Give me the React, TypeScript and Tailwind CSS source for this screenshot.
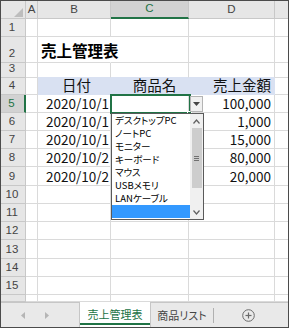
import React from "react";

type Row = { n?: number; h: string; date?: string; val?: string };

const rows: Row[] = [
  { n: 1, h: "h-[18px]" },
  { n: 2, h: "h-[26px]" },
  { n: 3, h: "h-[15px]" },
  { n: 4, h: "h-[17px]" },
  { n: 5, h: "h-[18px]", date: "2020/10/1", val: "100,000" },
  { n: 6, h: "h-[18px]", date: "2020/10/1", val: "1,000" },
  { n: 7, h: "h-[18px]", date: "2020/10/1", val: "15,000" },
  { n: 8, h: "h-[18px]", date: "2020/10/2", val: "80,000" },
  { n: 9, h: "h-[19px]", date: "2020/10/2", val: "20,000" },
  { n: 10, h: "h-[18px]" },
  { n: 11, h: "h-[18px]" },
  { n: 12, h: "h-[18px]" },
  { n: 13, h: "h-[19px]" },
  { n: 14, h: "h-[18px]" },
  { n: 15, h: "h-[18px]" },
  { h: "h-[7px]" },
];

const items = ["デスクトップPC", "ノートPC", "モニター", "キーボード", "マウス", "USBメモリ", "LANケーブル", ""];

function DataRow({ r }: { r: Row }) {
  const sel = r.n === 5;
  const isHead = r.n === 4;
  const isTitle = r.n === 2;
  const isAbove = r.n === 3;
  const fillBorder = isHead ? "border-r-[#d9e1f2] border-b-[#d9e1f2] bg-[#d9e1f2]" : isAbove ? "border-b-[#d9e1f2]" : "";
  return (
    <div className={`flex shrink-0 ${r.h}`}>
      <div
        className={`w-[25px] shrink-0 border-b border-[#c8c8c8] flex items-end justify-center pb-[1px] text-[11.5px] leading-none font-['Liberation_Sans',sans-serif] ${
          sel ? "bg-[#d2d2d2] text-[#217346] border-r-2 border-r-[#217346]" : "bg-[#e6e6e6] text-[#444] border-r"
        }`}
      >
        <span className="mb-[2px] mr-[2px]">{r.n ?? ""}</span>
      </div>
      <div className="w-[12px] shrink-0 border-r border-b border-[#dadada]" />
      <div
        className={`w-[73px] shrink-0 border-r border-b border-[#dadada] flex items-end ${fillBorder} ${
          isTitle ? "border-r-transparent" : ""
        } ${isHead ? "justify-center" : "justify-end"} relative`}
      >
        {isTitle && (
          <span className="absolute left-[3px] bottom-[4px] whitespace-nowrap text-[15.5px] font-bold leading-none text-black">
            売上管理表
          </span>
        )}
        {isHead && <span className="text-[14.5px] leading-none mb-[2px] pl-[5px] text-[#111]">日付</span>}
        {r.date && <span className="text-[13.5px] leading-none mb-[2px] pr-[1px] text-[#111]">{r.date}</span>}
      </div>
      <div className={`w-[78px] shrink-0 border-r border-b border-[#dadada] flex items-end justify-center ${fillBorder}`}>
        {isHead && <span className="text-[14.5px] leading-none mb-[2px] pl-[10px] text-[#111]">商品名</span>}
      </div>
      <div className={`w-[86px] shrink-0 border-r border-b border-[#dadada] flex items-end justify-end ${fillBorder}`}>
        {isHead && <span className="text-[14.5px] leading-none mb-[2px] pr-[3px] text-[#111]">売上金額</span>}
        {r.val && <span className="text-[13.5px] leading-none mb-[2px] pr-[3px] text-[#111]">{r.val}</span>}
      </div>
      <div className="flex-1 border-b border-[#dadada]" />
    </div>
  );
}

export default function App() {
  return (
    <div className="w-[290px] h-[329px] bg-white font-['Noto_Sans_CJK_JP',sans-serif]">
      <div className="w-[289px] h-[328px] border border-[#4b4b4b] flex flex-col overflow-hidden relative">
        {/* column headers */}
        <div className="flex h-[18px] shrink-0 text-[11.5px] leading-none text-[#444] font-['Liberation_Sans',sans-serif]">
          <div className="w-[25px] shrink-0 bg-[#e6e6e6] border-r border-b border-[#c8c8c8] relative">
            <svg className="absolute left-[13px] top-[7px]" width="9" height="9" viewBox="0 0 9 9">
              <polygon points="9,0 9,9 0,9" fill="#bdbdbd" />
            </svg>
          </div>
          <div className="w-[12px] shrink-0 bg-[#e6e6e6] border-r border-b border-[#c8c8c8] flex items-center justify-center">A</div>
          <div className="w-[73px] shrink-0 bg-[#e6e6e6] border-r border-b border-[#c8c8c8] flex items-center justify-center">B</div>
          <div className="w-[78px] shrink-0 bg-[#d2d2d2] border-r border-[#c8c8c8] border-b-2 border-b-[#217346] text-[#217346] flex items-center justify-center">C</div>
          <div className="w-[86px] shrink-0 bg-[#e6e6e6] border-r border-b border-[#c8c8c8] flex items-center justify-center">D</div>
          <div className="flex-1 bg-[#e6e6e6] border-b border-[#c8c8c8]" />
        </div>

        {rows.map((r, i) => (
          <DataRow key={i} r={r} />
        ))}

        {/* sheet tab bar */}
        <div className="flex-1 flex bg-[#e9e9e9] border-t border-[#c6c6c6] relative">
          <div className="w-[78px] shrink-0 flex items-center">
            <svg className="ml-[20px]" width="5" height="7" viewBox="0 0 5 7">
              <polygon points="4,0 4,7 0,3.5" fill="#b5b5b5" />
            </svg>
            <svg className="ml-[18px]" width="5" height="7" viewBox="0 0 5 7">
              <polygon points="1,0 1,7 5,3.5" fill="#b5b5b5" />
            </svg>
          </div>
          <div className="w-[72px] shrink-0 bg-white border-l border-r border-[#c6c6c6] -mt-px flex flex-col">
            <div className="flex-1 flex items-center justify-center text-[11px] text-[#217346] leading-none pt-[3px]">
              売上管理表
            </div>
            <div className="h-[2px] bg-[#217346] mb-[2px]" />
          </div>
          <div className="w-[62px] shrink-0 flex items-center justify-center text-[11px] text-[#444] leading-none pt-[1px] [font-feature-settings:'palt']">
            商品リスト
          </div>
          <div className="w-px h-[15px] bg-[#b0b0b0] self-center mt-[1px]" />
          <div className="w-[68px] shrink-0 flex items-center justify-center pt-[1px]">
            <svg width="13" height="13" viewBox="0 0 13 13">
              <circle cx="6.5" cy="6.5" r="5.8" fill="none" stroke="#6a6a6a" strokeWidth="1" />
              <line x1="6.5" y1="3.5" x2="6.5" y2="9.5" stroke="#6a6a6a" strokeWidth="1.2" />
              <line x1="3.5" y1="6.5" x2="9.5" y2="6.5" stroke="#6a6a6a" strokeWidth="1.2" />
            </svg>
          </div>
          <div className="flex-1" />
        </div>

        {/* selected cell */}
        <div className="absolute left-[109px] top-[93px] w-[81px] h-[20px] border-2 border-[#217346]" />
        <div className="absolute left-[186px] top-[110px] w-[5px] h-[5px] bg-[#217346] border border-white" />

        {/* dropdown button */}
        <div className="absolute left-[189px] top-[95px] w-[13px] h-[16px] bg-[#f0f0f0] border border-[#b4b4b4] flex items-center justify-center">
          <svg width="7" height="4" viewBox="0 0 7 4">
            <polygon points="0,0 7,0 3.5,4" fill="#444" />
          </svg>
        </div>

        {/* dropdown list */}
        <div className="absolute left-[110px] top-[112px] w-[93px] h-[107px] border border-[#5a5a5a] bg-white flex">
          <div className="w-[78px] flex flex-col">
            {items.map((t, i) => (
              <div
                key={i}
                className={`h-[13px] shrink-0 pl-[3px] flex items-center text-[9.5px] leading-[13px] whitespace-nowrap text-black [font-feature-settings:'palt'] ${
                  i === 7 ? "bg-[#3399ff]" : ""
                }`}
              >
                {t}
              </div>
            ))}
          </div>
          <div className="flex-1 bg-[#f0f0f0] flex flex-col items-center">
            <div className="h-[14px] flex items-center justify-center">
              <svg width="7" height="5" viewBox="0 0 7 5">
                <polyline points="0.5,4.5 3.5,1 6.5,4.5" fill="none" stroke="#606060" strokeWidth="1.2" />
              </svg>
            </div>
            <div className="w-[10px] h-[60px] bg-[#cdcdcd] flex flex-col items-center justify-center gap-[1px]">
              <div className="w-[5px] h-px bg-[#707070]" />
              <div className="w-[5px] h-px bg-[#707070]" />
              <div className="w-[5px] h-px bg-[#707070]" />
            </div>
            <div className="flex-1" />
            <div className="h-[14px] flex items-center justify-center">
              <svg width="7" height="5" viewBox="0 0 7 5">
                <polyline points="0.5,0.5 3.5,4 6.5,0.5" fill="none" stroke="#606060" strokeWidth="1.2" />
              </svg>
            </div>
          </div>
        </div>
      </div>
    </div>
  );
}
